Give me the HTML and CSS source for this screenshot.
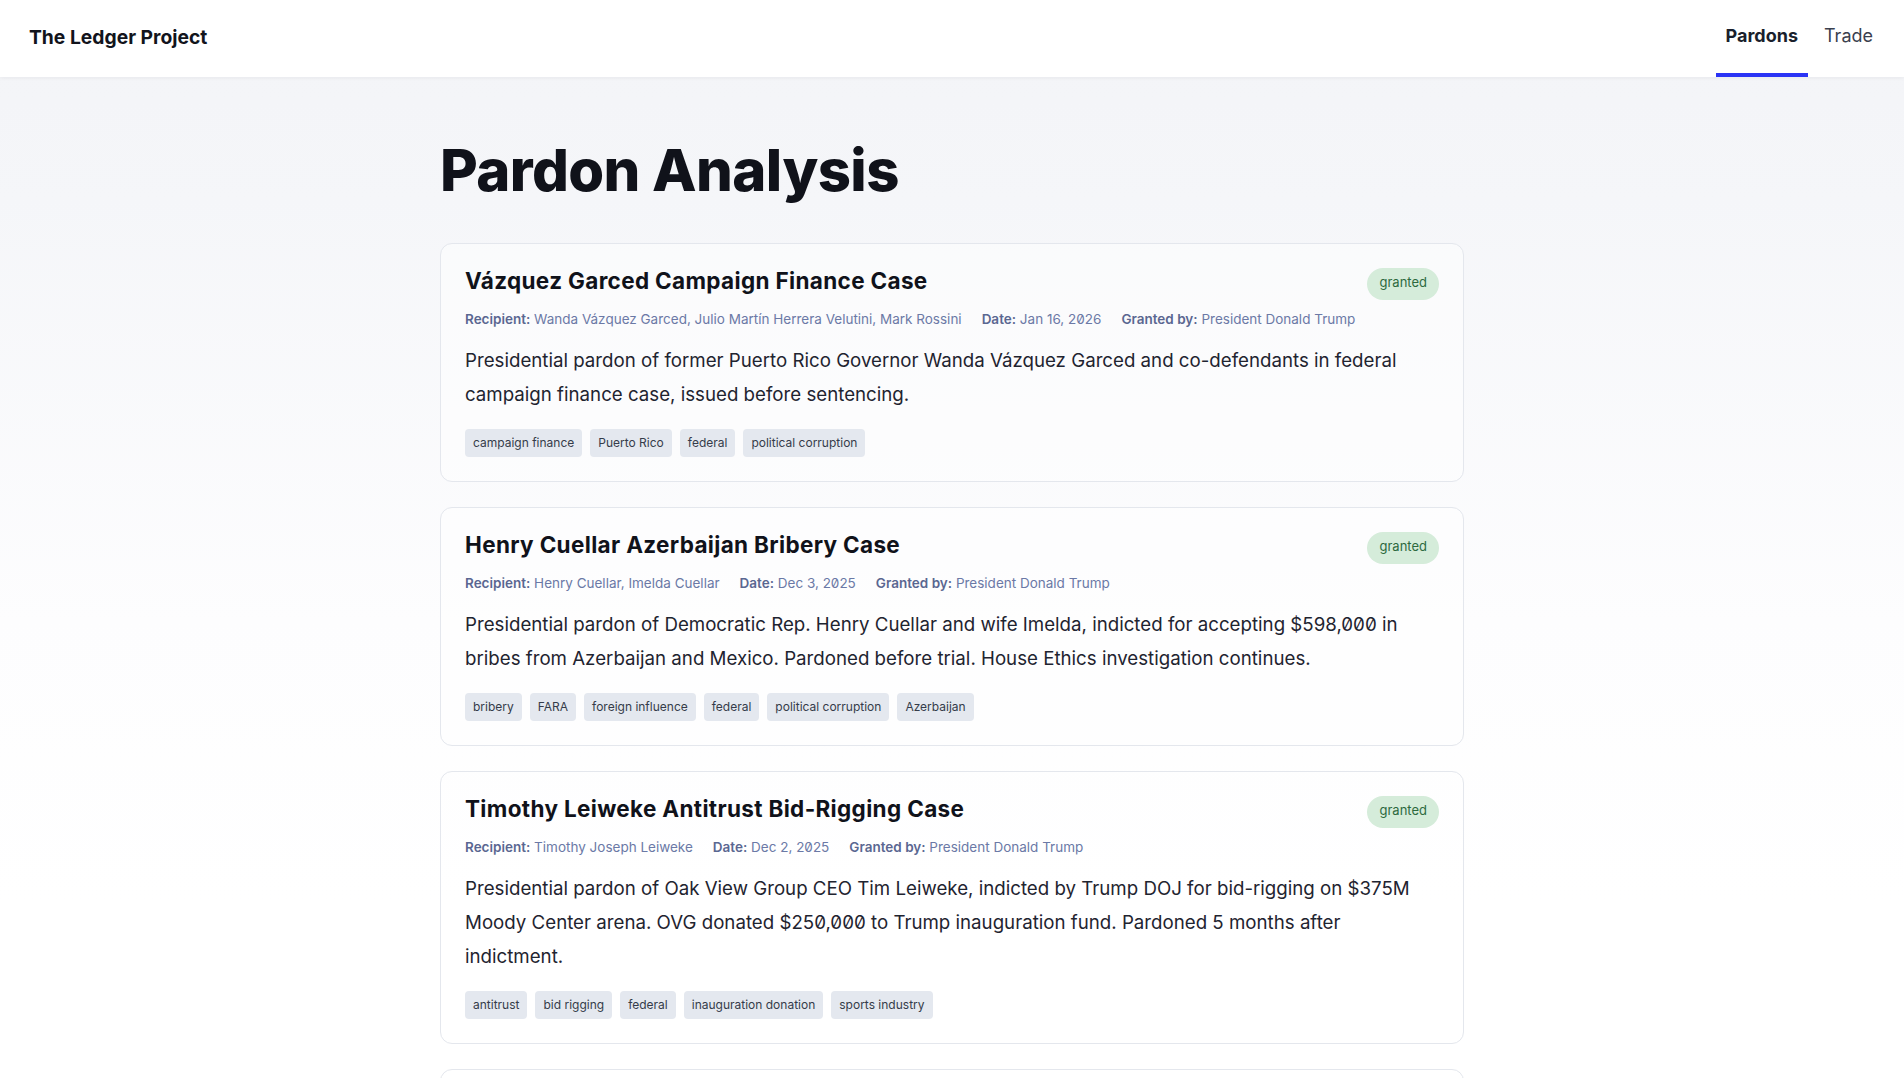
FILE: index.html
```html
<!DOCTYPE html>
<html lang="en">
<head>
<meta charset="utf-8">
<title>Pardon Analysis — The Ledger Project</title>
<link rel="stylesheet" href="styles.css">
</head>
<body>
<header class="site-header">
  <a class="brand" href="#">The Ledger Project</a>
  <nav class="nav">
    <a class="nav-link active" href="#">Pardons</a>
    <a class="nav-link" href="#">Trade</a>
  </nav>
</header>

<main class="main">
  <h1 class="page-title">Pardon Analysis</h1>

  <article class="card">
    <div class="card-head">
      <h2 class="card-title">Vázquez Garced Campaign Finance Case</h2>
      <span class="status">granted</span>
    </div>
    <div class="meta">
      <span><b>Recipient:</b> Wanda Vázquez Garced, Julio Martín Herrera Velutini, Mark Rossini</span>
      <span><b>Date:</b> Jan 16, 2026</span>
      <span><b>Granted by:</b> President Donald Trump</span>
    </div>
    <p class="desc">Presidential pardon of former Puerto Rico Governor Wanda Vázquez Garced and co-defendants in federal campaign finance case, issued before sentencing.</p>
    <div class="tags">
      <span class="tag">campaign finance</span>
      <span class="tag">Puerto Rico</span>
      <span class="tag">federal</span>
      <span class="tag">political corruption</span>
    </div>
  </article>

  <article class="card">
    <div class="card-head">
      <h2 class="card-title">Henry Cuellar Azerbaijan Bribery Case</h2>
      <span class="status">granted</span>
    </div>
    <div class="meta">
      <span><b>Recipient:</b> Henry Cuellar, Imelda Cuellar</span>
      <span><b>Date:</b> Dec 3, 2025</span>
      <span><b>Granted by:</b> President Donald Trump</span>
    </div>
    <p class="desc">Presidential pardon of Democratic Rep. Henry Cuellar and wife Imelda, indicted for accepting $598,000 in bribes from Azerbaijan and Mexico. Pardoned before trial. House Ethics investigation continues.</p>
    <div class="tags">
      <span class="tag">bribery</span>
      <span class="tag">FARA</span>
      <span class="tag">foreign influence</span>
      <span class="tag">federal</span>
      <span class="tag">political corruption</span>
      <span class="tag">Azerbaijan</span>
    </div>
  </article>

  <article class="card">
    <div class="card-head">
      <h2 class="card-title">Timothy Leiweke Antitrust Bid-Rigging Case</h2>
      <span class="status">granted</span>
    </div>
    <div class="meta">
      <span><b>Recipient:</b> Timothy Joseph Leiweke</span>
      <span><b>Date:</b> Dec 2, 2025</span>
      <span><b>Granted by:</b> President Donald Trump</span>
    </div>
    <p class="desc">Presidential pardon of Oak View Group CEO Tim Leiweke, indicted by Trump DOJ for bid-rigging on $375M Moody Center arena. OVG donated $250,000 to Trump inauguration fund. Pardoned 5 months after indictment.</p>
    <div class="tags">
      <span class="tag">antitrust</span>
      <span class="tag">bid rigging</span>
      <span class="tag">federal</span>
      <span class="tag">inauguration donation</span>
      <span class="tag">sports industry</span>
    </div>
  </article>

  <article class="card">
    <div class="card-head">
      <h2 class="card-title">Additional Pardon Case</h2>
      <span class="status">granted</span>
    </div>
    <div class="meta">
      <span><b>Granted by:</b> President Donald Trump</span>
    </div>
  </article>
</main>
</body>
</html>
```

FILE: styles.css
```css
* {
  box-sizing: border-box;
}

html, body {
  margin: 0;
  padding: 0;
}

body {
  font-family: "Inter", "Noto Sans", "Liberation Sans", sans-serif;
  font-feature-settings: "zero" 1;
  color: #1f2430;
  background: linear-gradient(180deg, #f3f4f7 0px, #f5f6f9 200px, #fdfdfe 620px, #ffffff 900px);
  min-height: 100vh;
}

a {
  text-decoration: none;
  color: inherit;
}

.site-header {
  height: 77px;
  background: #ffffff;
  display: flex;
  align-items: stretch;
  justify-content: space-between;
  padding: 0 21px 0 29px;
  box-shadow: 0 1px 4px rgba(20, 24, 40, 0.06);
  position: relative;
}

.brand {
  display: flex;
  align-items: center;
  font-size: 19.3px;
  font-weight: 700;
  color: #12141c;
  padding-bottom: 3px;
}

.nav {
  display: flex;
  gap: 6px;
}

.nav-link {
  display: flex;
  align-items: center;
  padding: 0 10px 2px;
  font-size: 18px;
  color: #3a404e;
  border-bottom: 4px solid transparent;
}

.nav-link.active {
  font-weight: 700;
  color: #1a1f2c;
  border-bottom-color: #2a33f5;
}

.main {
  width: 1024px;
  margin: 0 auto;
  padding: 61px 0 40px;
}

.page-title {
  margin: 0 0 41px;
  font-size: 58px;
  line-height: 64px;
  font-weight: 800;
  letter-spacing: -0.01em;
  color: #10121a;
}

.card {
  border: 1px solid #e4e7ed;
  border-radius: 12px;
  background: rgba(255, 255, 255, 0.45);
  padding: 24px;
  margin-bottom: 25px;
}

.card-head {
  display: flex;
  justify-content: space-between;
  align-items: flex-start;
  gap: 16px;
}

.card-title {
  margin: 0;
  font-size: 22.5px;
  line-height: 26px;
  font-weight: 700;
  color: #10121a;
  letter-spacing: 0.015em;
}

.status {
  flex: none;
  height: 32px;
  line-height: 29px;
  padding: 0 12px;
  border-radius: 16px;
  background: #d5ecda;
  color: #2d6a3f;
  font-size: 13px;
}

.meta {
  margin-top: 9px;
  display: flex;
  flex-wrap: wrap;
  column-gap: 20px;
  font-size: 13.5px;
  line-height: 20px;
  color: #6b79a6;
}

.meta b {
  font-weight: 600;
  color: #5a6791;
}

.desc {
  margin: 15px 0 0;
  font-size: 18.7px;
  line-height: 34px;
  color: #1f2430;
}

.tags {
  margin-top: 17px;
  display: flex;
  flex-wrap: wrap;
  gap: 8px;
}

.tag {
  height: 28px;
  line-height: 28px;
  padding: 0 8px;
  border-radius: 4px;
  background: #e4e8ef;
  color: #353c4a;
  font-size: 12px;
}
```
